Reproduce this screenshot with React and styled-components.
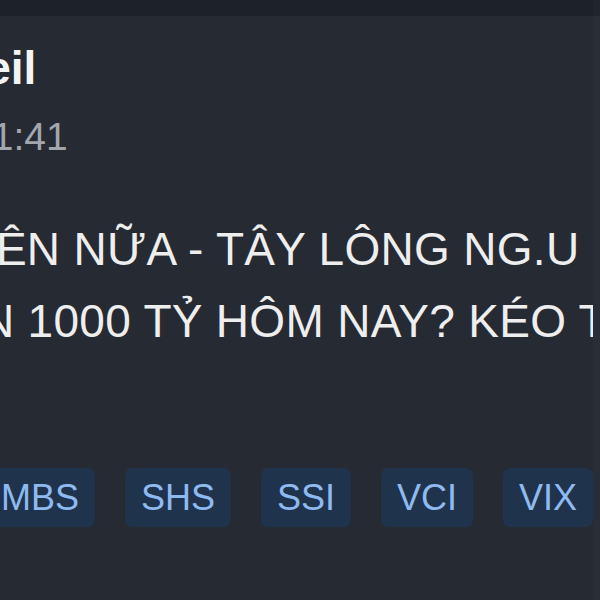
import React from 'react';
import styled, { createGlobalStyle } from 'styled-components';

const tags = ['MBS', 'SHS', 'SSI', 'VCI', 'VIX'];

const App = () => {
  return (
    <>
      <GlobalStyle />
      <Page>
        <Main>
          <TopBand />
          <Post>
            <Author indent={-48}>Neil</Author>
            <Time indent={-27}>11:41</Time>
            <Body>
              <Line indent={-30}>LÊN NỮA - TÂY LÔNG NG.U</Line>
              <Line indent={-19}>N 1000 TỶ HÔM NAY? KÉO THÊM</Line>
            </Body>
            <Tags>
              {tags.map((tag) => (
                <Tag key={tag}>{tag}</Tag>
              ))}
            </Tags>
          </Post>
        </Main>
        <Edge />
      </Page>
    </>
  );
};

export default App;

const GlobalStyle = createGlobalStyle`
  html, body {
    margin: 0;
    padding: 0;
    background: #262a33;
  }
  body {
    font-family: "Liberation Sans", Arial, sans-serif;
  }
`;

const Page = styled.div`
  width: 600px;
  height: 600px;
  display: flex;
  overflow: hidden;
  background: #262a33;
`;

const Main = styled.div`
  flex: 1;
  min-width: 0;
  display: flex;
  flex-direction: column;
  overflow: hidden;
`;

const TopBand = styled.div`
  height: 16px;
  flex-shrink: 0;
  background: #1d2129;
`;

const Edge = styled.div`
  width: 7px;
  flex-shrink: 0;
  background: linear-gradient(#21252d 0 16px, #292d35 16px);
`;

const Post = styled.div`
  padding-top: 24px;
  display: flex;
  flex-direction: column;
`;

const Author = styled.div`
  font-size: 46px;
  line-height: 56px;
  font-weight: 700;
  color: #f4f4f4;
  white-space: nowrap;
  text-indent: ${(p) => p.indent}px;
`;

const Time = styled.div`
  margin-top: 17px;
  font-size: 39px;
  line-height: 48px;
  color: #a2a6ad;
  white-space: nowrap;
  text-indent: ${(p) => p.indent}px;
`;

const Body = styled.div`
  margin-top: 52px;
  display: flex;
  flex-direction: column;
`;

const Line = styled.div`
  font-size: 46px;
  line-height: 72px;
  letter-spacing: 0.3px;
  color: #eeeeee;
  white-space: nowrap;
  text-indent: ${(p) => p.indent}px;
`;

const Tags = styled.div`
  margin-top: 111px;
  margin-left: -15px;
  display: flex;
  gap: 30px;
`;

const Tag = styled.span`
  flex-shrink: 0;
  height: 59px;
  padding: 0 16px;
  border-radius: 7px;
  background: #1f334d;
  color: #8fbaf0;
  font-size: 36px;
  line-height: 59px;
  white-space: nowrap;
`;
